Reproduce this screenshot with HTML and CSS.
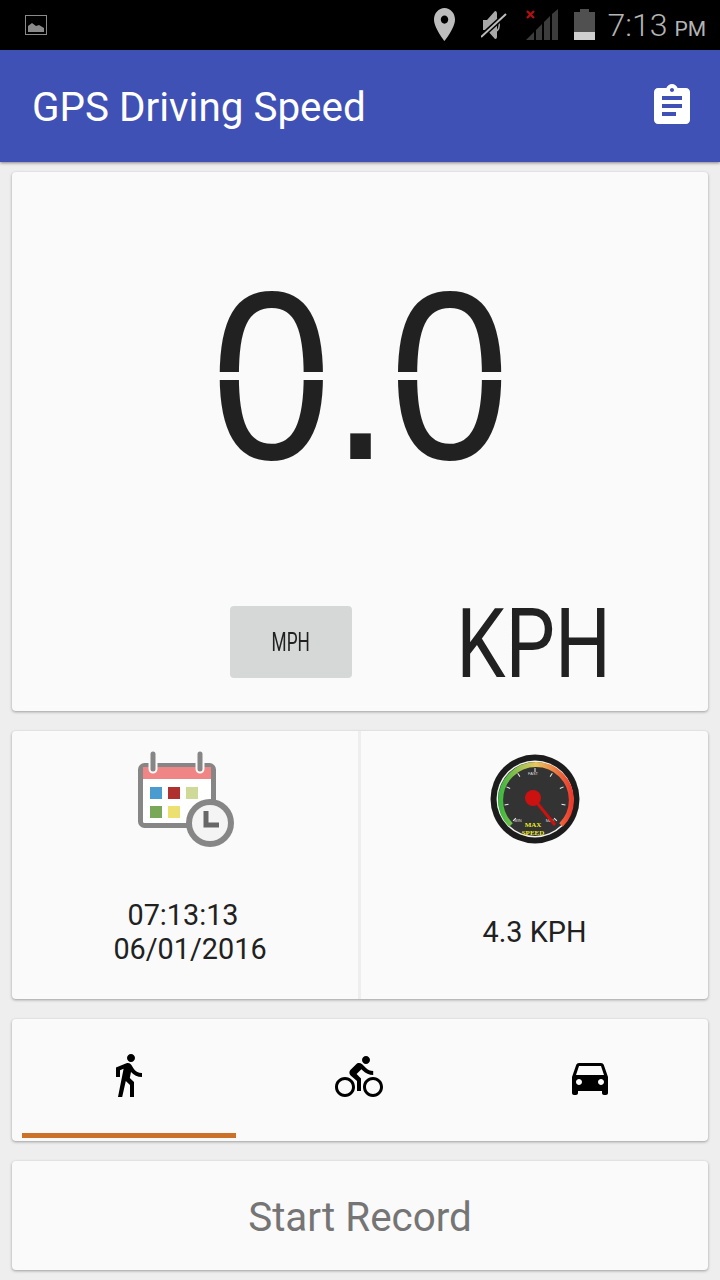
FILE: index.html
```html
<!DOCTYPE html>
<html lang="en">
  <head>
    <meta charset="UTF-8" />
    <title>GPS Driving Speed</title>
    <link rel="stylesheet" href="styles.css">
  </head>

  <body>
    <div id="status">
      <svg class="st-image" width="22" height="20" viewBox="0 0 22 20">
        <rect x="0.5" y="0.5" width="21" height="19" fill="none" stroke="#8a8a8a"/>
        <path d="M3 17V11l4-3 4 3 3-1 5 3v4z" fill="#8a8a8a"/>
      </svg>
      <svg class="st-pin" width="21" height="33" viewBox="5 2 14 20" preserveAspectRatio="none">
        <path fill="#bdbdbd" d="M12 2C8.13 2 5 5.13 5 9c0 5.25 7 13 7 13s7-7.75 7-13c0-3.87-3.13-7-7-7zm0 9.5c-1.38 0-2.5-1.12-2.5-2.5s1.12-2.5 2.5-2.5 2.5 1.12 2.5 2.5-1.12 2.5-2.5 2.5z"/>
      </svg>
      <svg class="st-mute" width="26" height="30" viewBox="0 0 26 30">
        <path d="M2 10h4l8-9c2 0 2 2 2 3v22c0 1 0 3-2 3l-8-9H2z" fill="#a8a8a8"/>
        <path d="M16 9c3 3 3 9 0 12" fill="none" stroke="#a8a8a8" stroke-width="1.5"/>
        <path d="M0 27L25 4" stroke="#000" stroke-width="5"/>
        <path d="M0 27L25 4" stroke="#bdbdbd" stroke-width="2"/>
      </svg>
      <svg class="st-signal" width="32" height="31" viewBox="0 0 32 31">
        <path d="M0 31L8 23V31zM10 31V21l6-6V31zM18 31V13l6-6V31zM26 31V5l6-5V31z" fill="#3c3c3c"/>
        <path d="M1 2l7 7M8 2l-7 7" stroke="#b01010" stroke-width="2.4"/>
      </svg>
      <svg class="st-battery" width="21" height="31" viewBox="0 0 21 31">
        <path d="M6 0h9v3h6v20H0V3h6z" fill="#505050"/>
        <rect y="23" width="21" height="8" fill="#cfcfcf"/>
      </svg>
      <span class="st-time">7:13</span>
      <span class="st-ampm">PM</span>
    </div>

    <div id="toolbar">
      <h1>GPS Driving Speed</h1>
      <svg width="48" height="48" viewBox="0 0 24 24">
        <path fill="#fff" d="M19 3h-4.18C14.4 1.84 13.3 1 12 1c-1.3 0-2.4.84-2.82 2H5c-1.1 0-2 .9-2 2v14c0 1.1.9 2 2 2h14c1.1 0 2-.9 2-2V5c0-1.1-.9-2-2-2zm-7 0c.55 0 1 .45 1 1s-.45 1-1 1-1-.45-1-1 .45-1 1-1zm2 14H7v-2h7v2zm3-4H7v-2h10v2zm0-4H7V7h10v2z"/>
      </svg>
    </div>

    <div id="main">
      <div class="card speed-card">
        <div class="speed-value">0.0</div>
        <div class="units">
          <div class="unit-btn"><span class="mph">MPH</span></div>
          <div class="unit-kph"><span class="kph">KPH</span></div>
        </div>
      </div>

      <div class="card info-card">
        <div class="info-cell left">
          <svg width="96" height="96" viewBox="0 0 96 96">
            <rect x="2.5" y="14.5" width="73" height="60" rx="4" fill="#fff" stroke="#868686" stroke-width="5"/>
            <rect x="5" y="16" width="68" height="12" fill="#f08585"/>
            <rect x="12" y="36" width="12" height="12" fill="#4a9bcf"/>
            <rect x="30" y="36" width="12" height="12" fill="#b03030"/>
            <rect x="48" y="36" width="12" height="12" fill="#cfd998"/>
            <rect x="12" y="55" width="12" height="12" fill="#78a858"/>
            <rect x="30" y="55" width="12" height="12" fill="#ece070"/>
            <path d="M15 3v15M62 3v15" stroke="#fafafa" stroke-width="9" stroke-linecap="round"/>
            <path d="M15 3v15M62 3v15" stroke="#868686" stroke-width="5" stroke-linecap="round"/>
            <circle cx="72" cy="72" r="24" fill="#868686"/>
            <circle cx="72" cy="72" r="18" fill="#f4f4f4"/>
            <path d="M68 60v14h13" fill="none" stroke="#666" stroke-width="5"/>
          </svg>
          <div class="info-text date-text">
            <span class="clock-line">07:13:13</span>
            <span>06/01/2016</span>
          </div>
        </div>
        <div class="info-cell right">
          <svg width="92" height="92" viewBox="0 0 92 92">
            <defs>
              <linearGradient id="arcColor" x1="0" y1="0" x2="1" y2="0">
                <stop offset="0" stop-color="#3fb83f"/>
                <stop offset="0.5" stop-color="#e8c860"/>
                <stop offset="1" stop-color="#ee3a2c"/>
              </linearGradient>
            </defs>
            <circle cx="46" cy="46" r="44.5" fill="#1c1c1c"/>
            <circle cx="46" cy="46" r="38.5" fill="#f2f2f2"/>
            <circle cx="46" cy="46" r="37" fill="#333"/>
            <path d="M22 72A35.4 35.4 0 1 1 72 72" fill="none" stroke="url(#arcColor)" stroke-width="5"/>
            <g stroke="#eee" stroke-width="1">
              <path d="M46 15v4" transform="rotate(-135 46 46)"/>
              <path d="M46 15v4" transform="rotate(-101 46 46)"/>
              <path d="M46 15v4" transform="rotate(-67 46 46)"/>
              <path d="M46 15v4" transform="rotate(-34 46 46)"/>
              <path d="M46 15v4"/>
              <path d="M46 15v4" transform="rotate(34 46 46)"/>
              <path d="M46 15v4" transform="rotate(67 46 46)"/>
              <path d="M46 15v4" transform="rotate(101 46 46)"/>
              <path d="M46 15v4" transform="rotate(135 46 46)"/>
            </g>
            <text class="g-small" x="44" y="22">FAST</text>
            <text class="g-small" x="29" y="69">MIN</text>
            <text class="g-small" x="61" y="69">MAX</text>
            <text class="g-label" x="44" y="74">MAX</text>
            <text class="g-label" x="44" y="82">SPEED</text>
            <path d="M44 45L66 72" stroke="#cc1111" stroke-width="3"/>
            <circle cx="44" cy="45" r="8" fill="#cc1111"/>
          </svg>
          <div class="info-text speed-text">4.3 KPH</div>
        </div>
      </div>

      <div class="card tabs-card">
        <div class="tab tab-active">
          <svg class="walk" width="48" height="48" viewBox="0 0 24 24">
            <path d="M13.5 5.5c1.1 0 2-.9 2-2s-.9-2-2-2-2 .9-2 2 .9 2 2 2zM9.8 8.9L7 23h2.1l1.8-8 2.1 2v6h2v-7.5l-2.1-2 .6-3C14.8 12 16.8 13 19 13v-2c-1.9 0-3.5-1-4.3-2.4l-1-1.6c-.4-.6-1-1-1.7-1-.3 0-.5.1-.8.1L6 8.3V13h2V9.6l1.8-.7"/>
          </svg>
        </div>
        <div class="tab">
          <svg width="48" height="48" viewBox="0 0 24 24">
            <path d="M15.5 5.5c1.1 0 2-.9 2-2s-.9-2-2-2-2 .9-2 2 .9 2 2 2zM5 12c-2.8 0-5 2.2-5 5s2.2 5 5 5 5-2.2 5-5-2.2-5-5-5zm0 8.5c-1.9 0-3.5-1.6-3.5-3.5s1.6-3.5 3.5-3.5 3.5 1.6 3.5 3.5-1.6 3.5-3.5 3.5zm5.8-10l2.4-2.4.8.8c1.3 1.3 3 2.1 5.1 2.1V9c-1.5 0-2.7-.6-3.6-1.5l-1.9-1.9c-.5-.4-1-.6-1.6-.6s-1.1.2-1.4.6L7.8 8.4c-.4.4-.6.9-.6 1.4 0 .6.2 1.1.6 1.4L11 14v5h2v-6.2l-2.2-2.3zM19 12c-2.8 0-5 2.2-5 5s2.2 5 5 5 5-2.2 5-5-2.2-5-5-5zm0 8.5c-1.9 0-3.5-1.6-3.5-3.5s1.6-3.5 3.5-3.5 3.5 1.6 3.5 3.5-1.6 3.5-3.5 3.5z"/>
          </svg>
        </div>
        <div class="tab">
          <svg width="48" height="48" viewBox="0 0 24 24">
            <path d="M18.92 6.01C18.72 5.42 18.16 5 17.5 5h-11c-.66 0-1.21.42-1.42 1.01L3 12v8c0 .55.45 1 1 1h1c.55 0 1-.45 1-1v-1h12v1c0 .55.45 1 1 1h1c.55 0 1-.45 1-1v-8l-2.08-5.99zM6.5 16c-.83 0-1.5-.67-1.5-1.5S5.67 13 6.5 13s1.5.67 1.5 1.5S7.33 16 6.5 16zm11 0c-.83 0-1.5-.67-1.5-1.5s.67-1.5 1.5-1.5 1.5.67 1.5 1.5-.67 1.5-1.5 1.5zM5 11l1.5-4.5h11L19 11H5z"/>
          </svg>
        </div>
      </div>

      <div class="card record-card">Start Record</div>
    </div>
  </body>
</html>
```

FILE: styles.css
```css
html,
body {
  height: 1280px;
  overflow: hidden;
}

body {
  font-family: Roboto, sans-serif;
  background-color: #eeeeee;
  margin: 0;
  padding: 0;
}

/* Status bar */
#status {
  display: flex;
  align-items: center;
  height: 50px;
  padding: 0 14px 0 25px;
  box-sizing: border-box;
  background-color: #000;
  color: #b4b4b4;
}

#status svg {
  flex: none;
}

.st-image {
  margin-right: auto;
}

.st-pin {
  margin-top: -1px;
}

.st-mute {
  margin-left: 26px;
  margin-top: -1px;
}

.st-signal {
  margin-left: 19px;
  margin-top: -2px;
}

.st-battery {
  margin-left: 16px;
  margin-top: -2px;
}

.st-time {
  margin-left: 12px;
  font-size: 32px;
  font-weight: 300;
}

.st-ampm {
  margin-left: 7px;
  margin-top: 7px;
  font-size: 21px;
}

/* App bar */
#toolbar {
  display: flex;
  align-items: center;
  justify-content: space-between;
  height: 112px;
  padding: 0 24px 0 32px;
  box-sizing: border-box;
  background-color: #3f51b5;
  box-shadow: 0 1px 3px rgba(0, 0, 0, 0.45);
  position: relative;
}

#toolbar h1 {
  margin: 3px 0 0;
  font-size: 40.4px;
  font-weight: 400;
  color: #fff;
}

/* Cards */
#main {
  display: flex;
  flex-direction: column;
  gap: 20px;
  padding: 10px 12px;
}

.card {
  background-color: #fafafa;
  border-radius: 4px;
  box-shadow: 0 1px 3px rgba(0, 0, 0, 0.35);
}

.speed-card {
  height: 539px;
  padding-top: 118px;
  box-sizing: border-box;
}

.speed-value {
  width: 420px;
  height: 172px;
  margin: 0 auto;
  font-family: "Liberation Sans", sans-serif;
  font-size: 240px;
  line-height: 172px;
  letter-spacing: -1px;
  text-align: center;
  white-space: nowrap;
  transform: scaleX(0.9);
  background: linear-gradient(#212121 82px, transparent 82px, transparent 90px, #212121 90px);
  -webkit-background-clip: text;
  background-clip: text;
  color: transparent;
}

.units {
  display: flex;
  align-items: center;
  gap: 121px;
  margin-top: 144px;
  padding-left: 218px;
}

.unit-btn {
  display: flex;
  align-items: center;
  justify-content: center;
  width: 122px;
  height: 72px;
  border-radius: 4px;
  background-color: #d6d8d8;
}

.unit-kph {
  display: flex;
  justify-content: center;
  width: 122px;
  height: 72px;
}

.mph {
  font-size: 25px;
  color: #212121;
  transform: scaleX(0.69);
}

.kph {
  margin-top: 2px;
  font-size: 97px;
  line-height: 72px;
  color: #212121;
  transform: scaleX(0.81);
}

.info-card {
  display: flex;
  height: 268px;
}

.info-cell {
  display: flex;
  flex-direction: column;
  align-items: center;
  padding-top: 20px;
  box-sizing: border-box;
}

.info-cell.left {
  width: 346px;
  border-right: 3px solid #eeeeee;
  box-sizing: content-box;
}

.info-cell.left svg {
  margin-left: 2px;
}

.info-cell.right {
  flex: 1;
  padding-top: 22px;
}

.info-text {
  font-size: 28.8px;
  line-height: 34px;
  color: #212121;
  text-align: center;
}

.info-text span {
  display: block;
}

.date-text {
  margin-top: 51px;
  margin-left: 10px;
}

.clock-line {
  margin-right: 14px;
}

.speed-text {
  margin-top: 70px;
}

.g-small {
  font-family: "Liberation Sans", sans-serif;
  font-size: 4px;
  fill: #ddd;
  text-anchor: middle;
}

.g-label {
  font-family: "Liberation Serif", serif;
  font-size: 7px;
  font-weight: bold;
  fill: #eded20;
  text-anchor: middle;
}

.tabs-card {
  display: flex;
  height: 122px;
  padding-right: 3px;
  box-sizing: border-box;
}

.tab {
  flex: 1;
  display: flex;
  justify-content: center;
  padding-top: 34px;
  box-sizing: border-box;
}

.tab-active {
  position: relative;
}

.tab-active::after {
  content: "";
  position: absolute;
  left: 10px;
  right: 7px;
  bottom: 3px;
  height: 5px;
  background-color: #cc7228;
}

.walk {
  margin-top: -2px;
}

.record-card {
  display: flex;
  align-items: center;
  justify-content: center;
  height: 109px;
  padding-top: 3px;
  box-sizing: border-box;
  font-size: 40.4px;
  color: #757575;
}
```
